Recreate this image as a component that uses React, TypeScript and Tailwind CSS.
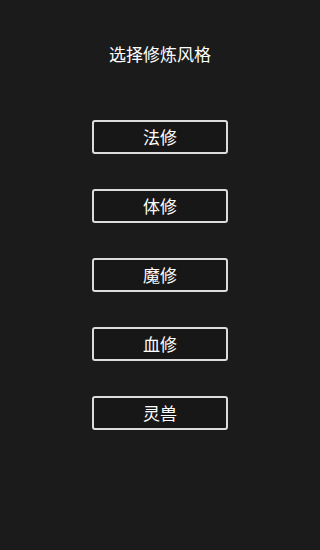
const STYLES = ['法修', '体修', '魔修', '血修', '灵兽'];

export default function App() {
  return (
    <div
      className="flex h-[550px] w-full flex-col items-center bg-[#1b1b1b] text-white"
      style={{ fontFamily: '"Noto Sans CJK SC", "Noto Sans", sans-serif' }}
    >
      <h1 className="mt-[41px] text-[17px] leading-[25px] font-normal">选择修炼风格</h1>
      <div className="mt-[54px] flex flex-col items-center gap-[35px]">
        {STYLES.map((name) => (
          <button
            key={name}
            className="flex h-[34px] w-[136px] items-center justify-center rounded-[3px] border-2 border-[#dcdcdc] bg-[#171717] text-[17px] text-white"
          >
            {name}
          </button>
        ))}
      </div>
    </div>
  );
}
